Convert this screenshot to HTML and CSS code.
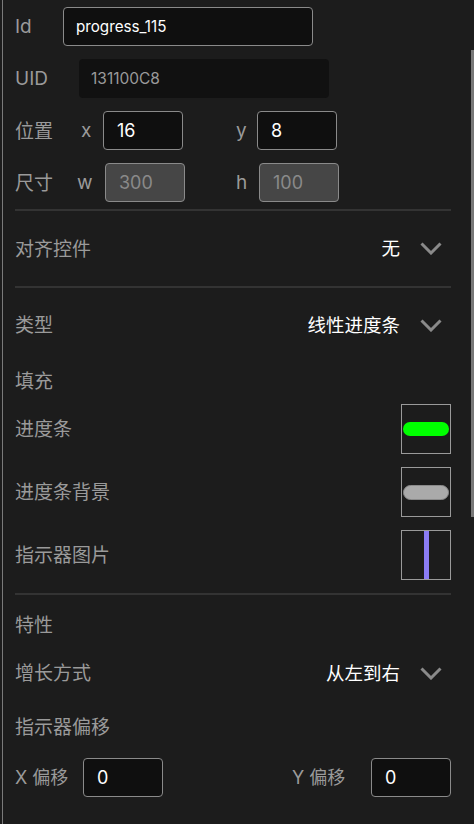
FILE: index.html
```html
<!DOCTYPE html>
<html lang="zh">
<head>
<meta charset="utf-8">
<link rel="stylesheet" href="styles.css">
</head>
<body>
<div class="panel">
  <div class="content">
    <div class="row r-id">
      <span class="label latin w-id">Id</span>
      <div class="input input-id">progress_115</div>
    </div>
    <div class="row r-uid">
      <span class="label latin w-uid">UID</span>
      <div class="uid-box">131100C8</div>
    </div>
    <div class="row r-pos">
      <span class="label w-pos">位置</span>
      <span class="label latin w-x">x</span>
      <div class="input num">16</div>
      <span class="label latin w-y">y</span>
      <div class="input num">8</div>
    </div>
    <div class="row r-size">
      <span class="label w-size">尺寸</span>
      <span class="label latin w-w">w</span>
      <div class="input num disabled">300</div>
      <span class="label latin w-h">h</span>
      <div class="input num disabled">100</div>
    </div>
    <div class="divider d1"></div>
    <div class="row r-align">
      <span class="label">对齐控件</span>
      <span class="value">无</span>
      <svg class="chev" width="22" height="13" viewBox="0 0 22 13"><path d="M1.5 1.5 L11 11 L20.5 1.5" fill="none" stroke="#8a8a8a" stroke-width="3"/></svg>
    </div>
    <div class="divider"></div>
    <div class="row r-type">
      <span class="label">类型</span>
      <span class="value">线性进度条</span>
      <svg class="chev" width="22" height="13" viewBox="0 0 22 13"><path d="M1.5 1.5 L11 11 L20.5 1.5" fill="none" stroke="#8a8a8a" stroke-width="3"/></svg>
    </div>
    <div class="row r-fill">
      <span class="label">填充</span>
    </div>
    <div class="row r-swatch first">
      <span class="label">进度条</span>
      <div class="swatch"><div class="pill green"></div></div>
    </div>
    <div class="row r-swatch">
      <span class="label">进度条背景</span>
      <div class="swatch"><div class="pill gray"></div></div>
    </div>
    <div class="row r-swatch">
      <span class="label">指示器图片</span>
      <div class="swatch center"><div class="bar"></div></div>
    </div>
    <div class="divider d3"></div>
    <div class="row r-feat">
      <span class="label">特性</span>
    </div>
    <div class="row r-grow">
      <span class="label">增长方式</span>
      <span class="value">从左到右</span>
      <svg class="chev" width="22" height="13" viewBox="0 0 22 13"><path d="M1.5 1.5 L11 11 L20.5 1.5" fill="none" stroke="#8a8a8a" stroke-width="3"/></svg>
    </div>
    <div class="row r-offt">
      <span class="label">指示器偏移</span>
    </div>
    <div class="row r-off">
      <span class="label w-ox">X 偏移</span>
      <div class="input num">0</div>
      <span class="label w-oy">Y 偏移</span>
      <div class="input num">0</div>
    </div>
  </div>
  <div class="scrollbar"></div>
</div>
</body>
</html>
```
FILE: styles.css
```css
* { box-sizing: border-box; }
html, body {
  margin: 0;
  padding: 0;
  background: #1c1c1c;
  width: 474px;
  height: 824px;
  overflow: hidden;
}
body {
  font-family: "Inter", "Noto Sans CJK SC", sans-serif;
  color: #9a9a9a;
}
.panel {
  position: relative;
  height: 824px;
  margin-left: 2px;
  border-left: 1px solid #7a7a7a;
}
.content {
  padding: 7px 23px 0 12px;
  display: flex;
  flex-direction: column;
}
.scrollbar {
  position: absolute;
  left: 468px;
  top: 50px;
  width: 3px;
  height: 467px;
  background: #777;
}
.row {
  display: flex;
  align-items: center;
}
.label {
  font-size: 19px;
  color: #9a9a9a;
  white-space: nowrap;
  flex: none;
  padding-bottom: 3px;
}
.label.latin { padding-bottom: 1px; }
.value {
  margin-left: auto;
  font-size: 18.5px;
  color: #fff;
  padding-bottom: 3px;
}
.chev {
  margin-left: 20px;
  margin-right: 9px;
  flex: none;
}
.input {
  height: 39px;
  border: 1px solid #8a8a8a;
  border-radius: 4px;
  background: #0f0f0f;
  color: #fff;
  display: flex;
  align-items: center;
  flex: none;
}
.input-id {
  width: 250px;
  padding-left: 12px;
  font-size: 15.2px;
}
.num {
  width: 80px;
  padding-left: 13px;
  font-size: 18px;
}
.num.disabled {
  background: #464646;
  color: #8a8a8a;
}
.uid-box {
  width: 250px;
  height: 39px;
  border-radius: 4px;
  background: #111;
  color: #9a9a9a;
  font-size: 15.5px;
  display: flex;
  align-items: center;
  padding-left: 12px;
}
.r-id { height: 39px; }
.w-id { width: 48px; }
.r-uid { height: 39px; margin-top: 13px; }
.w-uid { width: 64px; }
.r-pos { height: 39px; margin-top: 13px; }
.w-pos { width: 66px; }
.w-x { width: 22px; }
.w-y { width: 21px; margin-left: 53px; }
.r-size { height: 39px; margin-top: 13px; }
.w-size { width: 62px; }
.w-w { width: 28px; }
.w-h { width: 23px; margin-left: 51px; }
.divider {
  height: 2px;
  background: #333;
  flex: none;
}
.d1 { margin-top: 7px; }
.r-align { height: 75px; }
.r-type { height: 74px; }
.r-fill { height: 38px; }
.r-swatch { height: 50px; margin-top: 13px; }
.r-swatch.first { margin-top: 4px; }
.d3 { margin-top: 13px; }
.swatch {
  margin-left: auto;
  width: 50px;
  height: 50px;
  border: 1px solid #9a9a9a;
  display: flex;
  align-items: center;
  padding: 0 1px;
}
.swatch.center { justify-content: center; align-items: stretch; }
.pill {
  width: 46px;
  height: 14px;
  border-radius: 7px;
}
.green { background: #00ff00; }
.gray {
  height: 15px;
  background: #aaaaaa;
  border: 1px solid #8a8a8a;
  border-radius: 8px;
}
.bar {
  width: 5px;
  background: #8b7cf4;
}
.r-feat { height: 36px; margin-top: 12px; }
.r-grow { height: 36px; margin-top: 12px; }
.r-offt { height: 36px; margin-top: 18px; }
.r-off { height: 39px; margin-top: 13px; }
.w-ox { width: 68px; font-size: 18px; }
.w-oy { width: 79px; margin-left: 129px; font-size: 18px; }
```
